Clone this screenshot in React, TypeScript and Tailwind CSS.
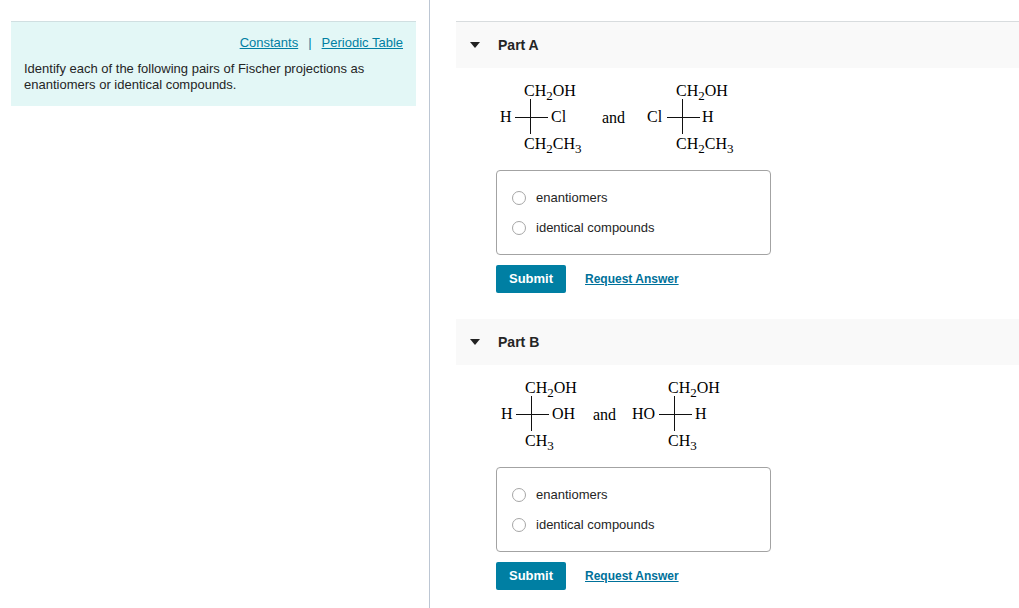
import { useState } from 'react'

interface Molecule {
  /** Centre of the cross */
  cx: number
  left: string
  leftX: number
  right: string
  rightX: number
  bottom: string
}

interface Part {
  id: string
  title: string
  andX: number
  molecules: Molecule[]
}

const parts: Part[] = [
  {
    id: 'a',
    title: 'Part A',
    andX: 106,
    molecules: [
      { cx: 34, left: 'H', leftX: 4, right: 'Cl', rightX: 55, bottom: 'CH2CH3' },
      { cx: 186, left: 'Cl', leftX: 151, right: 'H', rightX: 206, bottom: 'CH2CH3' },
    ],
  },
  {
    id: 'b',
    title: 'Part B',
    andX: 97,
    molecules: [
      { cx: 35, left: 'H', leftX: 5, right: 'OH', rightX: 56, bottom: 'CH3' },
      { cx: 178, left: 'HO', leftX: 136, right: 'H', rightX: 199, bottom: 'CH3' },
    ],
  },
]

const choices = ['enantiomers', 'identical compounds']

/** Chemical formula with its digits set as subscripts. */
function Formula({ x, y, value }: { x: number; y: number; value: string }) {
  const tokens = value.split(/(\d)/).filter(Boolean)
  return (
    <text x={x} y={y}>
      {tokens.map((token, i) => {
        const isDigit = /\d/.test(token)
        const afterDigit = i > 0 && /\d/.test(tokens[i - 1])
        return (
          <tspan key={i} dy={isDigit ? 4 : afterDigit ? -4 : 0} className={isDigit ? 'text-[13px]' : undefined}>
            {token}
          </tspan>
        )
      })}
    </text>
  )
}

function FischerPair({ part }: { part: Part }) {
  return (
    <svg
      width="250"
      height="80"
      viewBox="0 0 250 80"
      role="img"
      aria-label={`Fischer projections for ${part.title}`}
      className="block fill-black font-['Liberation_Serif',serif] text-[16px]"
    >
      {part.molecules.map((m) => (
        <g key={m.cx}>
          <Formula x={m.cx - 6} y={20} value="CH2OH" />
          <path d={`M${m.cx + 0.5} 23v35M${m.cx - 15} 41.5h33`} stroke="#111" fill="none" />
          <Formula x={m.leftX} y={46} value={m.left} />
          <Formula x={m.rightX} y={46} value={m.right} />
          <Formula x={m.cx - 6} y={73} value={m.bottom} />
        </g>
      ))}
      <text x={part.andX} y={47}>and</text>
    </svg>
  )
}

function PartSection({ part }: { part: Part }) {
  const [open, setOpen] = useState(true)

  return (
    <section className="mb-[26px]">
      <h2 className="bg-[#f9f9f9]">
        <button
          type="button"
          aria-expanded={open}
          onClick={() => setOpen(!open)}
          className="flex h-[46px] w-full items-center gap-[18px] pl-3.5 text-left text-sm font-bold"
        >
          <svg width="10" height="6" viewBox="0 0 10 6" aria-hidden className={open ? undefined : '-rotate-90'}>
            <path d="M0 0h10L5 6z" fill="#222" />
          </svg>
          {part.title}
        </button>
      </h2>

      {open && (
        <form className="pl-10 pt-2" onSubmit={(e) => e.preventDefault()}>
          <FischerPair part={part} />

          <fieldset className="mt-3.5 flex h-[85px] max-w-[275px] flex-col gap-3.5 rounded-[4px] border border-[#a3a3a3] pl-[15px] pt-[19px]">
            {choices.map((choice) => (
              <label key={choice} className="flex h-4 items-center gap-2.5 text-[13px] leading-4">
                <input
                  type="radio"
                  name={`part-${part.id}`}
                  value={choice}
                  className="size-3.5 appearance-none rounded-full border border-[#a6a6a6] bg-white checked:border-4 checked:border-[#007fa3]"
                />
                {choice}
              </label>
            ))}
          </fieldset>

          <div className="mt-2.5 flex items-center gap-[19px]">
            <button type="submit" className="h-7 w-[70px] rounded-[2px] bg-[#007fa3] text-[13px] font-bold text-white">
              Submit
            </button>
            <a href="#" className="text-xs font-bold text-[#00719a] underline">
              Request Answer
            </a>
          </div>
        </form>
      )}
    </section>
  )
}

export default function App() {
  return (
    <div className="flex min-h-screen bg-white font-['Liberation_Sans',Arial,sans-serif] text-[#252525]">
      <aside className="w-[42.2%] shrink-0 border-r border-[#bcc6d3] pl-[11px] pr-[13px] pt-[21px]">
        <div className="border-t border-[#d0dfe1] bg-[#e3f7f6] px-[13px] pb-[13px] pt-[13px] text-[13px] leading-4">
          <nav className="flex justify-end gap-2.5 text-[#007fa3]">
            <a href="#" className="underline">Constants</a>
            <span aria-hidden>|</span>
            <a href="#" className="underline">Periodic Table</a>
          </nav>
          <p className="mt-2.5">
            Identify each of the following pairs of Fischer projections as enantiomers or identical compounds.
          </p>
        </div>
      </aside>

      <main className="min-w-0 flex-1 pl-[26px] pt-[21px]">
        <div className="border-t border-[#d8dcde]">
          {parts.map((part) => (
            <PartSection key={part.id} part={part} />
          ))}
        </div>
      </main>
    </div>
  )
}
